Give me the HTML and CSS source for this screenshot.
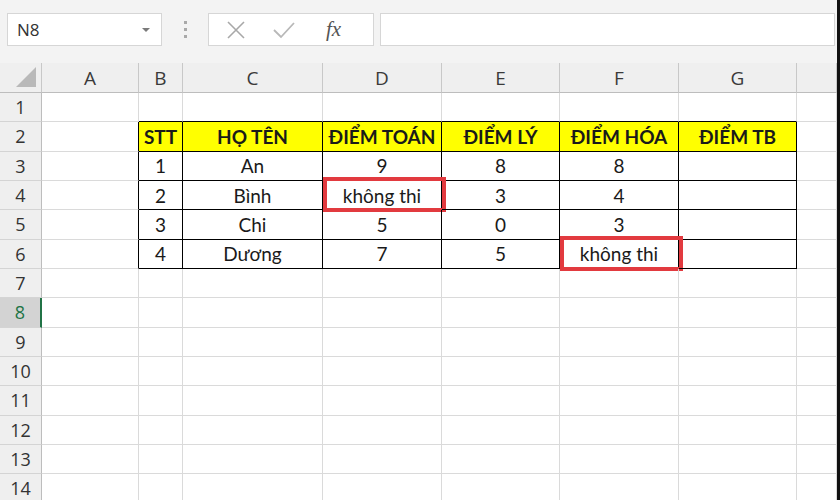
FILE: index.html
```html
<!DOCTYPE html>
<html lang="vi">
<head>
    <meta charset="UTF-8">
    <meta name="viewport" content="width=device-width, initial-scale=1.0">
    <title>Bảng điểm</title>
    <link rel="stylesheet" href="styles.css">
</head>
<body>
<div class="app">

    <div class="toolbar">
        <div class="namebox">
            <span>N8</span>
            <svg class="drop" width="10" height="6" viewBox="0 0 10 6"><path d="M1 1 L9 1 L5 5 Z" fill="#7a7a7a"/></svg>
        </div>
        <div class="grip"><i></i><i></i><i></i></div>
        <div class="fxbox">
            <svg class="btn" width="20" height="20" viewBox="0 0 20 20"><path d="M2 2 L18 18 M18 2 L2 18" stroke="#a8a8a8" stroke-width="1.6" fill="none"/></svg>
            <svg class="btn" width="24" height="20" viewBox="0 0 24 20"><path d="M2 10 L9 17 L22 3" stroke="#b8b8b8" stroke-width="1.8" fill="none"/></svg>
            <span class="fx">fx</span>
        </div>
        <div class="formula"></div>
    </div>

    <div class="sheet">
        <div class="row colhead">
            <div class="corner"><svg width="22" height="22" viewBox="0 0 22 22"><path d="M21 1 L21 21 L1 21 Z" fill="#b9b9b9"/></svg></div>
            <div>A</div><div>B</div><div>C</div><div>D</div><div>E</div><div>F</div><div>G</div><div></div>
        </div>

        <div class="row">
            <div class="rh">1</div>
            <div></div><div class="top"></div><div class="top"></div><div class="top"></div><div class="top"></div><div class="top"></div><div class="top"></div><div></div>
        </div>
        <div class="row">
            <div class="rh">2</div>
            <div class="lft"></div>
            <div class="t hd">STT</div><div class="t hd">HỌ TÊN</div><div class="t hd">ĐIỂM TOÁN</div><div class="t hd">ĐIỂM LÝ</div><div class="t hd">ĐIỂM HÓA</div><div class="t hd">ĐIỂM TB</div>
            <div></div>
        </div>
        <div class="row">
            <div class="rh">3</div>
            <div class="lft"></div>
            <div class="t">1</div><div class="t">An</div><div class="t">9</div><div class="t">8</div><div class="t">8</div><div class="t"></div>
            <div></div>
        </div>
        <div class="row">
            <div class="rh">4</div>
            <div class="lft"></div>
            <div class="t">2</div><div class="t">Bình</div><div class="t mark">không thi</div><div class="t">3</div><div class="t">4</div><div class="t"></div>
            <div></div>
        </div>
        <div class="row">
            <div class="rh">5</div>
            <div class="lft"></div>
            <div class="t">3</div><div class="t">Chi</div><div class="t">5</div><div class="t">0</div><div class="t">3</div><div class="t"></div>
            <div></div>
        </div>
        <div class="row">
            <div class="rh">6</div>
            <div class="lft"></div>
            <div class="t">4</div><div class="t">Dương</div><div class="t">7</div><div class="t">5</div><div class="t mark">không thi</div><div class="t"></div>
            <div></div>
        </div>
        <div class="row"><div class="rh">7</div><div></div><div></div><div></div><div></div><div></div><div></div><div></div><div></div></div>
        <div class="row"><div class="rh sel">8</div><div></div><div></div><div></div><div></div><div></div><div></div><div></div><div></div></div>
        <div class="row"><div class="rh">9</div><div></div><div></div><div></div><div></div><div></div><div></div><div></div><div></div></div>
        <div class="row"><div class="rh">10</div><div></div><div></div><div></div><div></div><div></div><div></div><div></div><div></div></div>
        <div class="row"><div class="rh">11</div><div></div><div></div><div></div><div></div><div></div><div></div><div></div><div></div></div>
        <div class="row"><div class="rh">12</div><div></div><div></div><div></div><div></div><div></div><div></div><div></div><div></div></div>
        <div class="row"><div class="rh">13</div><div></div><div></div><div></div><div></div><div></div><div></div><div></div><div></div></div>
        <div class="row"><div class="rh">14</div><div></div><div></div><div></div><div></div><div></div><div></div><div></div><div></div></div>
    </div>

</div>
</body>
</html>
```

FILE: styles.css
```css
body {
    margin: 0;
    background: #fff;
}
.app {
    width: 840px;
    height: 500px;
    overflow: hidden;
    box-sizing: border-box;
    border-right: 3px solid #111;
    background: #f3f3f3;
}

/* toolbar */
.toolbar {
    height: 63px;
    box-sizing: border-box;
    padding: 13px 0 0 7px;
    display: flex;
    align-items: flex-start;
}
.namebox {
    width: 155px;
    height: 33px;
    box-sizing: border-box;
    background: #fff;
    border: 1px solid #d6d6d6;
    display: flex;
    align-items: center;
    justify-content: space-between;
    padding: 0 10px 0 9px;
    font-family: "Open Sans", sans-serif;
    font-size: 17px;
    color: #333;
}
.grip {
    width: 46px;
    height: 33px;
    display: flex;
    flex-direction: column;
    align-items: center;
    justify-content: center;
    gap: 4px;
}
.grip i {
    width: 3px;
    height: 3px;
    background: #a9a9a9;
    display: block;
}
.fxbox {
    width: 166px;
    height: 33px;
    box-sizing: border-box;
    background: #fff;
    border: 1px solid #d6d6d6;
    display: flex;
    align-items: center;
    padding-left: 17px;
    gap: 26px;
}
.fx {
    font-family: "Liberation Serif", serif;
    font-style: italic;
    font-size: 21px;
    color: #555;
    margin-left: 4px;
}
.formula {
    margin-left: 6px;
    width: 455px;
    height: 33px;
    box-sizing: border-box;
    background: #fff;
    border: 1px solid #d6d6d6;
}

/* sheet grid */
.row {
    display: grid;
    grid-template-columns: 42px 97px 44px 140px 119px 118px 119px 118px 1fr;
    height: 29.33px;
    background: #fff;
    font-family: "Lato", sans-serif;
    font-size: 19px;
    color: #1a1a1a;
}
.row > div {
    box-sizing: border-box;
    border-right: 1px solid #dadada;
    border-bottom: 1px solid #dadada;
    display: flex;
    align-items: center;
    justify-content: center;
    position: relative;
}
.row .rh {
    background: #efefef;
    border-right-color: #bdbdbd;
    border-bottom-color: #d4d4d4;
    font-family: "Open Sans", sans-serif;
    font-size: 18px;
    color: #333;
}
.row .rh.sel {
    background: #d3d3d3;
    color: #217346;
    border-right: 2px solid #217346;
}
.row.colhead {
    height: 30px;
    background: #efefef;
    font-family: "Open Sans", sans-serif;
    font-size: 19px;
    color: #3a3a3a;
}
.row.colhead > div {
    border-right-color: #c8c8c8;
    border-bottom-color: #bdbdbd;
}
.corner {
    justify-content: flex-end !important;
    align-items: flex-end !important;
    padding: 0 4px 4px 0;
}
.row .top {
    border-bottom-color: #000;
}
.row .lft {
    border-right-color: #000;
}
.row .t {
    border-right-color: #000;
    border-bottom-color: #000;
}
.row .hd {
    background: #ffff00;
    font-weight: bold;
}
.mark::after {
    content: "";
    position: absolute;
    top: -4px;
    left: 0;
    right: -5px;
    bottom: -3px;
    border: 4px solid #e23a3f;
}
```
